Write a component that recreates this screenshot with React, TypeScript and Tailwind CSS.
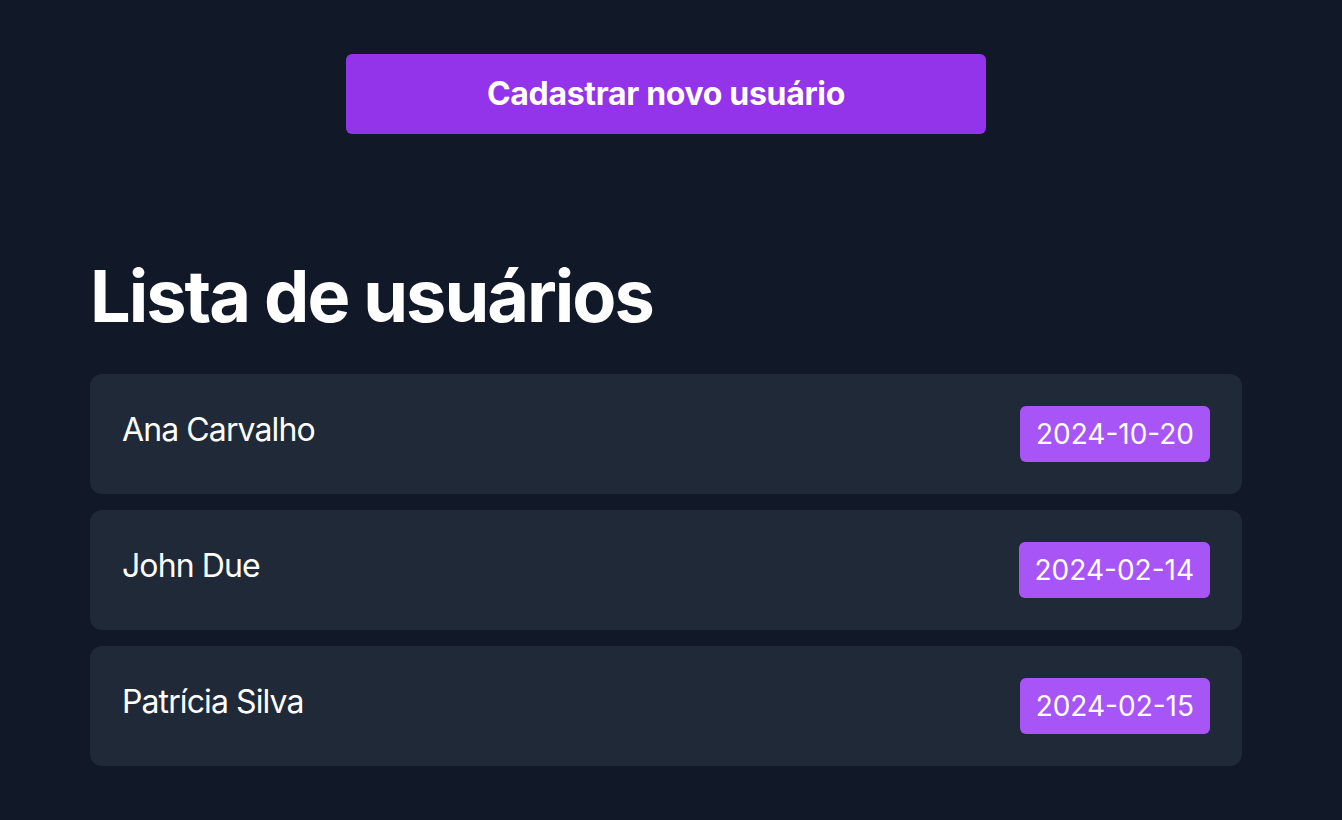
const users = [
  { name: "Ana Carvalho", date: "2024-10-20" },
  { name: "John Due", date: "2024-02-14" },
  { name: "Patrícia Silva", date: "2024-02-15" },
];

export default function App() {
  return (
    <div className="min-h-screen w-full bg-[#111827] font-['Inter','Liberation_Sans',sans-serif] text-white">
      <div className="ml-[90px] w-[1152px] pt-[54px]">
        <div className="flex justify-center">
          <button className="w-[640px] rounded-[6px] bg-[#9333ea] py-4 text-[32px] leading-[48px] font-bold tracking-[-0.01em]">
            Cadastrar novo usuário
          </button>
        </div>

        <h1 className="mt-[126px] text-[72px] leading-none font-bold tracking-[-0.028em]">
          Lista de usuários
        </h1>

        <ul className="mt-[42px] flex flex-col gap-4">
          {users.map((u) => (
            <li
              key={u.name}
              className="flex items-start justify-between rounded-[12px] bg-[#1f2937] p-8"
            >
              <span className="text-[32px] leading-[48px] tracking-[-0.028em]">{u.name}</span>
              <span className="rounded-[6px] bg-[#a855f7] px-4 py-2 text-[28px] leading-[40px]">
                {u.date}
              </span>
            </li>
          ))}
        </ul>
      </div>
    </div>
  );
}
